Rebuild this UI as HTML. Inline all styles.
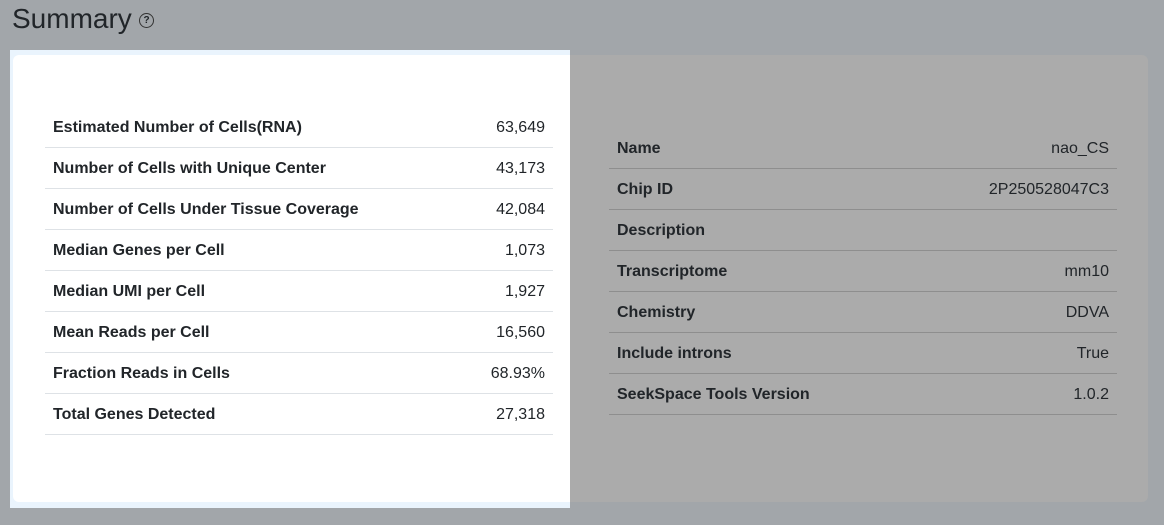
<!DOCTYPE html>
<html><head><style>
body{margin:0;width:1164px;height:525px;background:#a2a6aa;font-family:"Liberation Sans",sans-serif;position:relative;overflow:hidden;color:#212529}
h1{position:absolute;left:12px;top:3px;margin:0;font-size:28px;font-weight:400;color:#212529}
.q{position:absolute;left:139px;top:13px;width:13px;height:13px;border:1.3px solid #333;border-radius:50%;font-size:10px;line-height:13px;text-align:center;font-weight:700}
.card{position:absolute;left:13px;top:55px;width:1135px;height:447px;background:#ababab;border-radius:6px}
.hl{position:absolute;left:10px;top:50px;width:560px;height:458px;background:#eaf4fd}
.hlin{position:absolute;left:13px;top:55px;width:557px;height:447px;background:#fff;border-radius:6px 0 0 6px}
table{position:absolute;border-collapse:collapse;font-size:16px}
td{height:38px;padding:2px 8px 0;border-bottom:1px solid #dee2e6}
td:first-child{font-weight:700}
td:last-child{text-align:right}
#t2 td{border-bottom:1px solid #8e8e8e}
</style></head><body>
<h1>Summary</h1><div class="q">?</div>
<div class="card"></div>
<div class="hl"></div><div class="hlin"></div>
<table style="left:45px;top:107px;width:508px">
<tr><td>Estimated Number of Cells(RNA)</td><td>63,649</td></tr>
<tr><td>Number of Cells with Unique Center</td><td>43,173</td></tr>
<tr><td>Number of Cells Under Tissue Coverage</td><td>42,084</td></tr>
<tr><td>Median Genes per Cell</td><td>1,073</td></tr>
<tr><td>Median UMI per Cell</td><td>1,927</td></tr>
<tr><td>Mean Reads per Cell</td><td>16,560</td></tr>
<tr><td>Fraction Reads in Cells</td><td>68.93%</td></tr>
<tr><td>Total Genes Detected</td><td>27,318</td></tr>
</table>
<table id="t2" style="left:609px;top:128px;width:508px">
<tr><td>Name</td><td>nao_CS</td></tr>
<tr><td>Chip ID</td><td>2P250528047C3</td></tr>
<tr><td>Description</td><td></td></tr>
<tr><td>Transcriptome</td><td>mm10</td></tr>
<tr><td>Chemistry</td><td>DDVA</td></tr>
<tr><td>Include introns</td><td>True</td></tr>
<tr><td>SeekSpace Tools Version</td><td>1.0.2</td></tr>
</table>
</body></html>
